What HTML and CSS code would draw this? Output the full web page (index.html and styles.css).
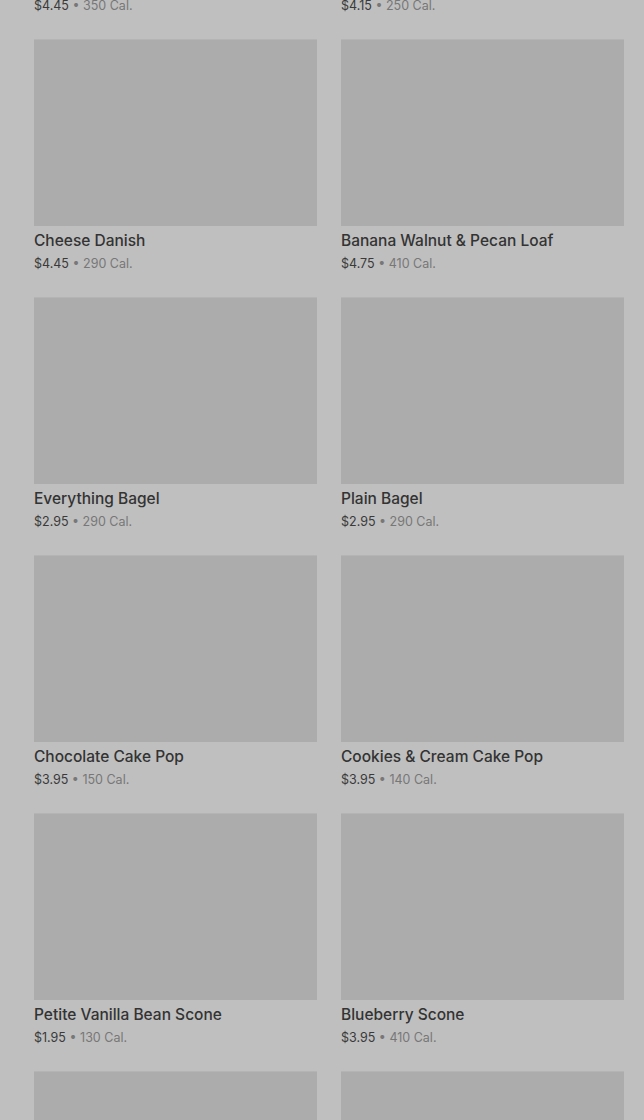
FILE: index.html
```html
<!DOCTYPE html>
<html lang="en">
<head>
    <meta charset="UTF-8">
    <title>Bakery - Menu</title>
    <link rel="stylesheet" href="styles.css">
</head>
<body>
    <div class="backdrop">
        <div class="product-grid">
            <div class="product-card">
                <div class="product-image"></div>
                <div class="product-name">Butter Croissant</div>
                <div class="product-meta"><span class="price">$4.45</span> • 350 Cal.</div>
            </div>
            <div class="product-card">
                <div class="product-image"></div>
                <div class="product-name">Chocolate Croissant</div>
                <div class="product-meta"><span class="price">$4.15</span> • 250 Cal.</div>
            </div>
            <div class="product-card">
                <div class="product-image"></div>
                <div class="product-name">Cheese Danish</div>
                <div class="product-meta"><span class="price">$4.45</span> • 290 Cal.</div>
            </div>
            <div class="product-card">
                <div class="product-image"></div>
                <div class="product-name">Banana Walnut &amp; Pecan Loaf</div>
                <div class="product-meta"><span class="price">$4.75</span> • 410 Cal.</div>
            </div>
            <div class="product-card">
                <div class="product-image"></div>
                <div class="product-name">Everything Bagel</div>
                <div class="product-meta"><span class="price">$2.95</span> • 290 Cal.</div>
            </div>
            <div class="product-card">
                <div class="product-image"></div>
                <div class="product-name">Plain Bagel</div>
                <div class="product-meta"><span class="price">$2.95</span> • 290 Cal.</div>
            </div>
            <div class="product-card">
                <div class="product-image"></div>
                <div class="product-name">Chocolate Cake Pop</div>
                <div class="product-meta"><span class="price">$3.95</span> • 150 Cal.</div>
            </div>
            <div class="product-card">
                <div class="product-image"></div>
                <div class="product-name">Cookies &amp; Cream Cake Pop</div>
                <div class="product-meta"><span class="price">$3.95</span> • 140 Cal.</div>
            </div>
            <div class="product-card">
                <div class="product-image"></div>
                <div class="product-name">Petite Vanilla Bean Scone</div>
                <div class="product-meta"><span class="price">$1.95</span> • 130 Cal.</div>
            </div>
            <div class="product-card">
                <div class="product-image"></div>
                <div class="product-name">Blueberry Scone</div>
                <div class="product-meta"><span class="price">$3.95</span> • 410 Cal.</div>
            </div>
            <div class="product-card">
                <div class="product-image"></div>
                <div class="product-name">Lemon Loaf</div>
                <div class="product-meta"><span class="price">$3.45</span> • 470 Cal.</div>
            </div>
            <div class="product-card">
                <div class="product-image"></div>
                <div class="product-name">Pumpkin Loaf</div>
                <div class="product-meta"><span class="price">$3.45</span> • 410 Cal.</div>
            </div>
        </div>
    </div>
</body>
</html>
```

FILE: styles.css
```css
html, body {
    margin: 0;
    padding: 0;
    height: 1120px;
    overflow: hidden;
}
body {
    font-family: Inter, "Noto Sans", Arial, sans-serif;
    background-color: #bfbfbf;
}
.backdrop {
    padding: 0 20px 0 34px;
}
/* page is scrolled: first row sits mostly above the viewport */
.product-grid {
    display: grid;
    grid-template-columns: 283px 283px;
    column-gap: 24px;
    row-gap: 23px;
    margin-top: -219px;
}
.product-image {
    height: 187px;
    background-color: #acacac;
    box-shadow: inset 0 1px 0 #b4b4b4;
}
.product-name {
    margin-top: 3px;
    font-size: 15.5px;
    line-height: 24px;
    font-weight: 500;
    color: #333333;
}
.product-meta {
    margin-top: 1px;
    font-size: 12.5px;
    line-height: 20px;
    color: #777777;
}
.product-meta .price {
    color: #3a3a3a;
}
```
